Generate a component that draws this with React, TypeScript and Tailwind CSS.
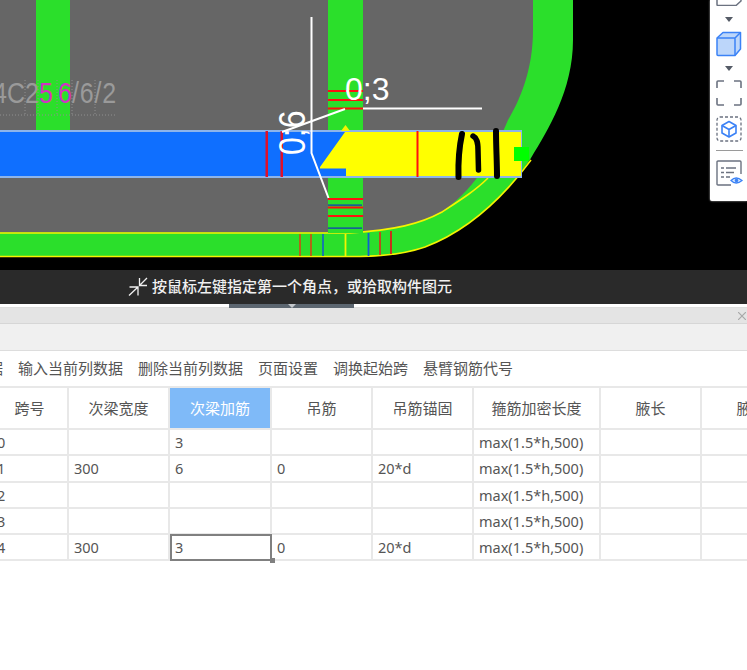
const columns = [
  { title: '跨号', w: 77 },
  { title: '次梁宽度', w: 101 },
  { title: '次梁加筋', w: 102 },
  { title: '吊筋', w: 101 },
  { title: '吊筋锚固', w: 101 },
  { title: '箍筋加密长度', w: 127 },
  { title: '腋长', w: 101 },
  { title: '腋高', w: 101 },
];

const rows = [
  ['0', '', '3', '', '', 'max(1.5*h,500)', '', ''],
  ['1', '300', '6', '0', '20*d', 'max(1.5*h,500)', '', ''],
  ['2', '', '', '', '', 'max(1.5*h,500)', '', ''],
  ['3', '', '', '', '', 'max(1.5*h,500)', '', ''],
  ['4', '300', '3', '0', '20*d', 'max(1.5*h,500)', '', ''],
];

const toolbarItems = ['据', '输入当前列数据', '删除当前列数据', '页面设置', '调换起始跨', '悬臂钢筋代号'];

// the CAD drawing in the viewport
const CadDrawing = () => (
  <svg viewBox="0 0 747 270" className="block h-[270px] w-[747px]">
    <rect width="747" height="270" fill="#000000" />
    <path d="M0 0H573V40C573 90 548 130 531 158C510 190 470 230 425 247C405 254 385 256 360 257H0Z" fill="#2bdf2b" />
    <path d="M0 0H533V30C533 70 520 100 508 120C495 150 480 185 442 212C420 224 395 230 350 232.5H0Z" fill="#666666" />
    <path d="M0 233H350C395 230 420 224 442 212C462 199 476 190 488 178" fill="none" stroke="#f4f400" strokeWidth="1.6" />
    <path d="M0 256.5H360C385 256 405 254 425 247C470 230 505 195 531 160" fill="none" stroke="#f4f400" strokeWidth="1.6" />
    <rect x="36" y="0" width="34" height="130" fill="#2bdf2b" />
    <rect x="328" y="0" width="35" height="233" fill="#2bdf2b" />

    <g stroke="#8f8f8f" strokeWidth="1" strokeDasharray="1 2">
      <path d="M0 115H117M25 80V115M38 80V115M57 80V115M72 80V115M95 80V115" fill="none" />
    </g>
    <g fontFamily="'Liberation Sans', sans-serif" fontSize="25" transform="translate(0 103) scale(1 1.16)">
      <text x="-7" y="0" fill="#9a9a9a">4C</text>
      <text x="25" y="0" fill="#9a9a9a">2</text>
      <text x="39" y="0" fill="#d431c4">5</text>
      <text x="58" y="0" fill="#d431c4">6</text>
      <text x="72" y="0" fill="#9a9a9a" letterSpacing="0.8">/6/2</text>
    </g>

    <rect x="0" y="130" width="522" height="48" fill="#8db4ea" />
    <rect x="0" y="132" width="346" height="44" fill="#0f6fff" />
    <path d="M320 167L345 132H521V176H346V168.500H320Z" fill="#ffff00" />
    <path d="M341 131L345.500 125L350 131Z" fill="#f4f400" />
    <rect x="514" y="147" width="15" height="14" fill="#00ff00" />
    <rect x="265.500" y="131" width="2.500" height="46" fill="#e0102a" />
    <rect x="280.500" y="131" width="2.500" height="46" fill="#e0102a" />
    <rect x="416.500" y="131" width="2" height="46" fill="#ff1010" />

    <g fill="#ff1010">
      <rect x="328" y="90" width="35" height="2" />
      <rect x="328" y="99" width="35" height="2" />
      <rect x="328" y="107.500" width="35" height="2" />
      <rect x="328" y="198" width="35" height="2" />
      <rect x="328" y="206.500" width="35" height="2" />
      <rect x="328" y="215" width="35" height="2" />
    </g>
    <rect x="328" y="204.500" width="34" height="1.200" fill="#1030c0" />
    <rect x="328" y="227.500" width="34" height="1.200" fill="#1030c0" />

    <g strokeWidth="1.800">
      <path d="M300 234V256M311 234V256" stroke="#bf5a14" />
      <path d="M323 234V256" stroke="#1570b8" />
      <path d="M345.500 234V256" stroke="#f4f400" />
      <path d="M368.500 233V256" stroke="#0f5fd0" />
      <path d="M380 232V255" stroke="#c8401a" />
      <path d="M391 231V254" stroke="#d8201a" />
    </g>

    <g fill="none" stroke="#ffffff" strokeWidth="2">
      <path d="M311.500 17V153L328.500 198" />
      <path d="M282 132L345 109" />
      <path d="M363 108.500H482" />
    </g>
    <g fontFamily="'Liberation Sans', sans-serif" fontSize="32" fill="#ffffff">
      <text x="345" y="100">0;3</text>
      <text transform="translate(305 155) rotate(-90) scale(1 1.15)">0;6</text>
    </g>

    <g fill="none" stroke="#000000" strokeLinecap="round">
      <path d="M462 134C459 148 458 160 458.500 177" strokeWidth="6" />
      <path d="M473 136C477 138 478 142 478 150L478.500 170" strokeWidth="5.500" />
      <path d="M496 131C496 146 497 162 497 176" strokeWidth="6" />
    </g>
  </svg>
);

const Caret = () => (
  <svg viewBox="0 0 8 5" className="block h-[5px] w-[8px]">
    <path d="M0 0H8L4 5Z" fill="#555b66" />
  </svg>
);

const SideToolbar = () => (
  <div className="absolute right-0 top-0 flex h-[201px] w-[37px] flex-col items-center rounded-bl-[2px] bg-white pl-px shadow-[0_0_2px_rgba(255,255,255,0.8)]">
    <svg viewBox="0 0 26 6" className="block h-[6px] w-[26px]">
      <path d="M1 0V4.500Q1 5.500 2 5.500H20L25 1V0" fill="none" stroke="#6b7280" strokeWidth="1.500" />
    </svg>
    <div className="mt-[11px]">
      <Caret />
    </div>
    <svg viewBox="0 0 26 26" className="mt-[9px] block h-[26px] w-[26px]">
      <path d="M7 1.500H24.500V18L19 24.500H2Q1 24.500 1 23.500V7Z" fill="#bcd6fa" stroke="#3b82f6" strokeWidth="1.500" strokeLinejoin="round" />
      <path d="M1 7H19V24.500M19 7L24.500 1.500" fill="none" stroke="#3b82f6" strokeWidth="1.500" />
    </svg>
    <div className="mt-[9px]">
      <Caret />
    </div>
    <svg viewBox="0 0 26 26" className="mt-[9px] block h-[26px] w-[26px]">
      <path d="M1 8V2Q1 1 2 1H8M18 1H24Q25 1 25 2V8M25 18V24Q25 25 24 25H18M8 25H2Q1 25 1 24V18" fill="none" stroke="#6b7280" strokeWidth="1.600" />
    </svg>
    <svg viewBox="0 0 26 26" className="mt-[10px] block h-[26px] w-[26px]">
      <rect x="1" y="1" width="24" height="24" rx="3" fill="none" stroke="#6b7280" strokeWidth="1.300" strokeDasharray="3 2" />
      <path d="M13 5.500L20 9.500V17L13 21L6 17V9.500Z" fill="none" stroke="#3b82f6" strokeWidth="1.600" strokeLinejoin="round" />
      <path d="M6 9.500L13 13.500L20 9.500M13 13.500V21" fill="none" stroke="#3b82f6" strokeWidth="1.600" />
    </svg>
    <div className="mt-[8px] h-px w-[27px] bg-[#9a9a9a]" />
    <svg viewBox="0 0 27 26" className="mt-[9px] block h-[26px] w-[27px]">
      <path d="M15 25H2Q1 25 1 24V2Q1 1 2 1H24Q25 1 25 2V14" fill="none" stroke="#6b7280" strokeWidth="1.400" />
      <path d="M5 8H8M10 8H20M5 12.500H8M10 12.500H18M5 17H8M10 17H14" fill="none" stroke="#6b7280" strokeWidth="1.300" />
      <path d="M15 20.500Q20 15.500 26 20.500Q20 25.500 15 20.500Z" fill="#dbeafe" stroke="#3b82f6" strokeWidth="1.300" />
      <circle cx="20.500" cy="20.500" r="1.800" fill="#3b82f6" />
    </svg>
  </div>
);

export default function App() {
  return (
    <div className="flex h-[670px] w-[747px] flex-col overflow-hidden bg-white [font-family:'Noto_Sans','Noto_Sans_CJK_SC',sans-serif]">
      <div className="relative h-[270px] shrink-0">
        <CadDrawing />
        <SideToolbar />
      </div>

      {/* status hint */}
      <div className="flex h-[34px] shrink-0 items-center gap-[4px] bg-[#2a2a2a] pl-[128px] text-[15px] font-medium text-[#f0f0f0]">
        <svg viewBox="0 0 20 20" className="block h-[20px] w-[20px]">
          <path d="M1 18.500L10 10M1.500 10H10V18.500M19 1L11.500 8.500M11.500 1V8.500H19" fill="none" stroke="#f0f0f0" strokeWidth="1.300" />
        </svg>
        <span className="relative top-[-1px]">按鼠标左键指定第一个角点，或拾取构件图元</span>
      </div>

      {/* splitter */}
      <div className="h-[4px] shrink-0 border-b border-[#dddddd] bg-white">
        <div className="ml-[229px] flex h-[5px] w-[125px] justify-center bg-[#5c6670]">
          <svg viewBox="0 0 8 4" className="block h-[4px] w-[8px]">
            <path d="M0 0H8L4 4Z" fill="#c4c8cc" />
          </svg>
        </div>
      </div>

      {/* panel title */}
      <div className="flex h-[16px] shrink-0 items-center justify-end border-b border-[#d6d6d6] bg-[#e4e4e4] pr-[1px]">
        <svg viewBox="0 0 8 8" className="block h-[8px] w-[8px]">
          <path d="M0 0L8 8M8 0L0 8" stroke="#a8a8a8" strokeWidth="1.200" />
        </svg>
      </div>
      <div className="h-[27px] shrink-0 border-b border-[#dddddd] bg-[#f0f0f0]" />

      {/* toolbar */}
      <div className="ml-[-12px] flex h-[35px] shrink-0 items-center gap-[15px] whitespace-nowrap text-[15px] leading-none text-[#555555]">
        {toolbarItems.map((item) => (
          <span key={item}>{item}</span>
        ))}
      </div>

      {/* span table */}
      <div className="relative ml-[-8px] grid w-[811px] shrink-0 grid-cols-[77px_101px_102px_101px_101px_127px_101px_101px] grid-rows-[42px_26px_27px_26px_26px_26px] border-t-2 border-[#e8e8e8] text-[#555555]">
        {columns.map((col, i) => (
          <div
            key={col.title}
            className={`flex items-center justify-center border-b-2 border-r-2 border-[#e8e8e8] text-[15px] ${
              i === 2 ? 'bg-[#7fbaf8] text-white' : ''
            }`}
          >
            {col.title}
          </div>
        ))}
        {rows.map((row, r) =>
          row.map((value, c) => (
            <div
              key={`${r}-${c}`}
              className="flex items-center border-b-2 border-r-2 border-[#e8e8e8] pl-[5px] text-[14.5px] leading-none"
            >
              {value}
            </div>
          ))
        )}
        {/* selected cell */}
        <div className="absolute bottom-0 left-[178px] h-[27px] w-[102px] border-2 border-[#808080]">
          <div className="absolute bottom-[-4px] right-[-5px] h-[5px] w-[5px] bg-[#808080]" />
        </div>
      </div>
    </div>
  );
}
